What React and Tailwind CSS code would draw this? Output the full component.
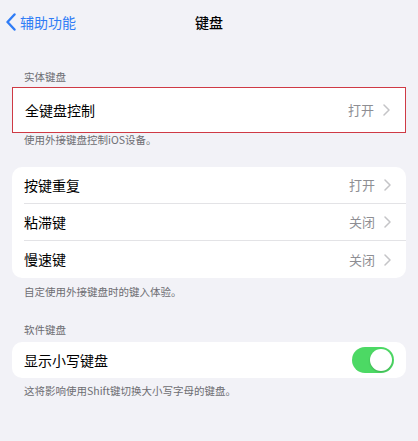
const font = { fontFamily: '"Noto Sans CJK SC", "Noto Sans", sans-serif' };

function Chevron() {
  return (
    <svg className="w-[7px] h-[12px] ml-[9px]" viewBox="0 0 7 12" fill="none" stroke="#c4c4c7" strokeWidth={1.5} strokeLinecap="round" strokeLinejoin="round">
      <path d="M1 1l5 5-5 5" />
    </svg>
  );
}

function Row({ label, value, last, tall }) {
  return (
    <div className={`flex items-center pl-3 ${tall ? 'h-[44px]' : 'h-[37px]'}`}>
      <div className={`flex flex-1 items-center h-full pr-[15px] ${last ? '' : 'border-b border-[#e3e3e6]'}`}>
        <span className="flex-1 text-[14px] text-black">{label}</span>
        <span className="text-[13px] text-[#8e8e93]">{value}</span>
        <Chevron />
      </div>
    </div>
  );
}

function Note({ children, className = '' }) {
  return <div className={`px-6 text-[10.5px] leading-[14px] text-[#6d6d72] ${className}`}>{children}</div>;
}

export default function App() {
  return (
    <div className="w-[418px] h-[441px] bg-[#f2f2f7] overflow-hidden" style={font}>
      {/* nav bar */}
      <div className="relative flex items-center h-[44px]">
        <div className="flex items-center pl-[6px] text-[#2f7cf6]">
          <svg className="w-[10px] h-[18px]" viewBox="0 0 10 18" fill="none" stroke="currentColor" strokeWidth={2.4} strokeLinecap="round" strokeLinejoin="round">
            <path d="M8.5 1.5L1.5 9l7 7.5" />
          </svg>
          <span className="ml-[4px] text-[14px]">辅助功能</span>
        </div>
        <div className="absolute left-0 right-0 text-center text-[14px] font-medium text-black pointer-events-none">键盘</div>
      </div>

      <Note className="mt-[26px]">实体键盘</Note>
      <div className="mx-3 mt-[3px] bg-white border border-[#cf3a45]">
        <Row label="全键盘控制" value="打开" last tall />
      </div>
      <Note>使用外接键盘控制iOS设备。</Note>

      <div className="mx-3 mt-[20px] bg-white rounded-[10px]">
        <Row label="按键重复" value="打开" />
        <Row label="粘滞键" value="关闭" />
        <Row label="慢速键" value="关闭" last />
      </div>
      <Note className="mt-[7px]">自定使用外接键盘时的键入体验。</Note>

      <Note className="mt-[24px]">软件键盘</Note>
      <div className="mx-3 mt-[5px] bg-white rounded-[10px] h-[36px] flex items-center pl-3 pr-[12px]">
        <span className="flex-1 text-[14px] text-black">显示小写键盘</span>
        <div className="w-[42px] h-[26px] rounded-full bg-[#4cd964] flex items-center justify-end p-[2px]">
          <div className="w-[22px] h-[22px] rounded-full bg-white shadow-[0_1px_2px_rgba(0,0,0,0.2)]" />
        </div>
      </div>
      <Note className="mt-[6px]">这将影响使用Shift键切换大小写字母的键盘。</Note>
    </div>
  );
}
